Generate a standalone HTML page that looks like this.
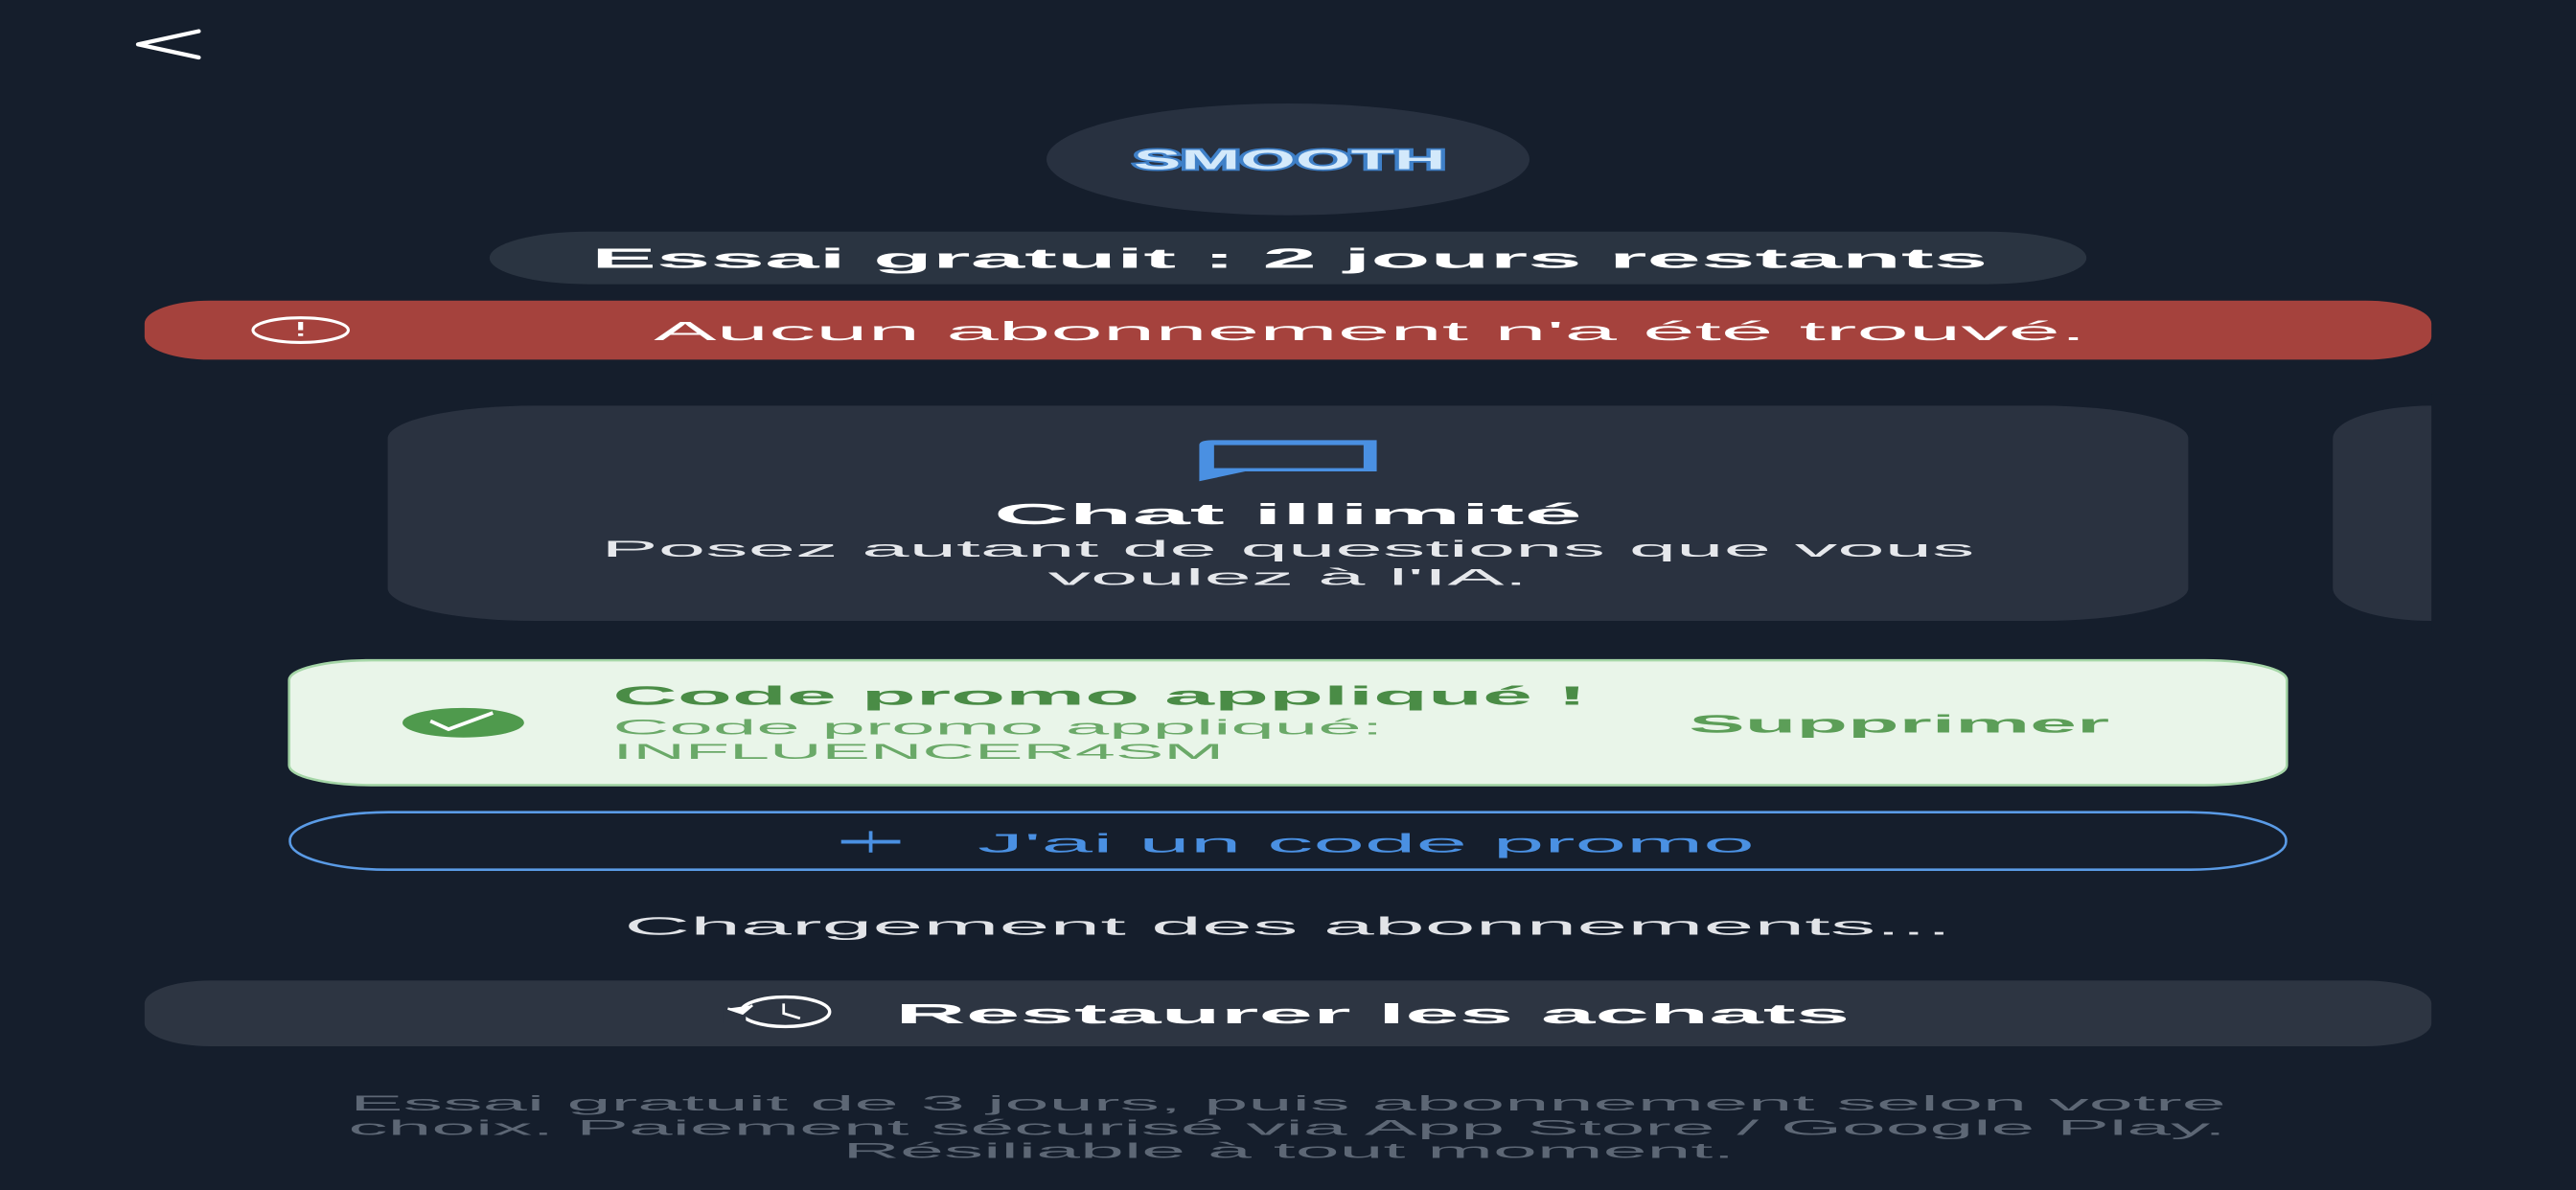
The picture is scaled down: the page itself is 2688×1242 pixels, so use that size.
<!DOCTYPE html>
<html><head><meta charset="utf-8"><style>
html,body{margin:0;padding:0;background:#151e2c;overflow:hidden}
svg{display:block}
text{font-family:"Liberation Sans",sans-serif}
</style></head><body>
<svg width="2688" height="1242" viewBox="0 0 1568 724.5" preserveAspectRatio="none" xmlns="http://www.w3.org/2000/svg">
<rect width="1568" height="724.5" fill="#151e2c"/>
<path d="M121 19 L84 27 L121 35" fill="none" stroke="#fff" stroke-width="2.5" stroke-linecap="round" stroke-linejoin="round"/>
<ellipse cx="784" cy="97" rx="147" ry="34" fill="#283140"/>
<text x="690" y="103" textLength="190" lengthAdjust="spacingAndGlyphs" font-size="17" font-weight="900" fill="#d3e9fb" stroke="#3f80c8" stroke-width="2" paint-order="stroke">SMOOTH</text>
<rect x="298" y="141" width="972" height="32" rx="60" ry="16" fill="#2a3441"/>
<text x="360" y="163" textLength="850" lengthAdjust="spacingAndGlyphs" font-size="17" font-weight="bold" fill="#fff">Essai gratuit : 2 jours restants</text>
<rect x="88" y="183" width="1392" height="36" rx="40" ry="14" fill="#a5423d"/>
<ellipse cx="183" cy="201" rx="29" ry="7.5" fill="none" stroke="#fff" stroke-width="1.8"/>
<rect x="181.5" y="196" width="3" height="5" fill="#fff"/><rect x="181.5" y="203" width="3" height="1.6" fill="#fff"/>
<text x="398" y="207" textLength="872" lengthAdjust="spacingAndGlyphs" font-size="16" fill="#fff">Aucun abonnement n'a été trouvé.</text>
<rect x="236" y="247" width="1096" height="131" rx="90" ry="20" fill="#2a3240"/>
<rect x="1420" y="247" width="120" height="131" rx="90" ry="20" fill="#2a3240"/>
<rect x="1480" y="240" width="88" height="145" fill="#151e2c"/>
<path d="M730 271 Q730 268 738 268 L838 268 L838 287 L758 287 L730 293 Z" fill="#4a90e2"/>
<rect x="739" y="271" width="91" height="14" fill="#2a3240"/>
<text x="605" y="319" textLength="358" lengthAdjust="spacingAndGlyphs" font-size="18" font-weight="bold" fill="#fff">Chat illimité</text>
<text x="366" y="339" textLength="836" lengthAdjust="spacingAndGlyphs" font-size="14" fill="#e6e8ec">Posez autant de questions que vous</text>
<text x="638" y="356" textLength="292" lengthAdjust="spacingAndGlyphs" font-size="14" fill="#e6e8ec">voulez à l'IA.</text>
<rect x="176" y="402" width="1216" height="76" rx="50" ry="12" fill="#e9f5e9" stroke="#a5d6a7" stroke-width="1.5"/>
<ellipse cx="282" cy="440" rx="37" ry="9" fill="#4f9a4d"/>
<path d="M262 439 L273 444 L300 434" fill="none" stroke="#fff" stroke-width="2.2"/>
<text x="373" y="429" textLength="593" lengthAdjust="spacingAndGlyphs" font-size="16" font-weight="bold" fill="#4a8c46">Code promo appliqué !</text>
<text x="373" y="447" textLength="469" lengthAdjust="spacingAndGlyphs" font-size="13" fill="#6aa968">Code promo appliqué:</text>
<text x="373" y="462" textLength="372" lengthAdjust="spacingAndGlyphs" font-size="13" fill="#6aa968">INFLUENCER4SM</text>
<text x="1028" y="446" textLength="256" lengthAdjust="spacingAndGlyphs" font-size="15" font-weight="bold" fill="#5c9e58">Supprimer</text>
<rect x="176.5" y="494.5" width="1215" height="35" rx="60" ry="17" fill="none" stroke="#5a9be6" stroke-width="1.5"/>
<path d="M512 512.5 L548 512.5 M530 506 L530 519" stroke="#4a90e2" stroke-width="2.2"/>
<text x="595" y="519" textLength="473" lengthAdjust="spacingAndGlyphs" font-size="16" fill="#4a90e2">J'ai un code promo</text>
<text x="380" y="569" textLength="808" lengthAdjust="spacingAndGlyphs" font-size="15" fill="#e2e4e8">Chargement des abonnements...</text>
<rect x="88" y="597" width="1392" height="40" rx="40" ry="14" fill="#2d3542"/>
<ellipse cx="478" cy="616" rx="27" ry="9" fill="none" stroke="#fff" stroke-width="2"/>
<rect x="440" y="613" width="14" height="10" fill="#2d3542"/>
<path d="M443 614 L452 617 L458 612" fill="#fff" stroke="#fff" stroke-width="1.5"/>
<path d="M477 611 L477 617 L487 620" fill="none" stroke="#fff" stroke-width="1.6"/>
<text x="545" y="623" textLength="581" lengthAdjust="spacingAndGlyphs" font-size="17" font-weight="bold" fill="#fff">Restaurer les achats</text>
<g font-size="13" fill="#5d6775">
<text x="213" y="676" textLength="1142" lengthAdjust="spacingAndGlyphs">Essai gratuit de 3 jours, puis abonnement selon votre</text>
<text x="212" y="691" textLength="1143" lengthAdjust="spacingAndGlyphs">choix. Paiement sécurisé via App Store / Google Play.</text>
<text x="513" y="705" textLength="543" lengthAdjust="spacingAndGlyphs">Résiliable à tout moment.</text>
</g>
</svg>
</body></html>
